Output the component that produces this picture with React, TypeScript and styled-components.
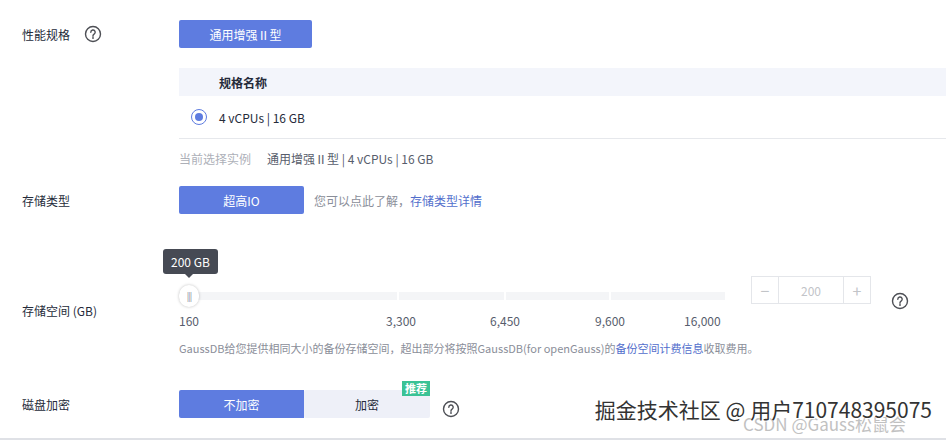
import styled, { createGlobalStyle } from "styled-components";

const Global = createGlobalStyle`
  body { margin: 0; background: #fff; font-family: "Noto Sans CJK SC", "Noto Sans", sans-serif; color: #252b3a; }
`;

const Page = styled.div`
  width: 946px;
  height: 440px;
  position: relative;
  overflow: hidden;
  border-bottom: 2px solid #dfe1e6;
  box-sizing: border-box;
`;

const Row = styled.div<{ $h: number; $align?: string }>`
  display: flex;
  align-items: ${p => p.$align || "center"};
  height: ${p => p.$h}px;
`;

const Label = styled.div`
  width: 179px;
  padding-left: 22px;
  box-sizing: border-box;
  font-size: 12px;
  color: #252b3a;
  display: flex;
  align-items: center;
  gap: 14px;
  flex-shrink: 0;
`;

const Content = styled.div`
  flex: 1;
  display: flex;
  flex-direction: column;
`;

const Btn = styled.div<{ $w: number; $active?: boolean }>`
  width: ${p => p.$w}px;
  height: 28px;
  display: flex;
  align-items: center;
  justify-content: center;
  font-size: 12px;
  background: ${p => (p.$active ? "#5e7ce0" : "#eef0f8")};
  color: ${p => (p.$active ? "#fff" : "#252b3a")};
  border-radius: 2px;
  position: relative;
`;

const Table = styled.div`
  margin-top: 0;
`;
const THead = styled.div`
  height: 28px;
  background: #f3f5fb;
  display: flex;
  align-items: center;
  padding-left: 40px;
  font-size: 12px;
  font-weight: 700;
`;
const TRow = styled.div`
  height: 42px;
  border-bottom: 1px solid #e6e8ec;
  display: flex;
  align-items: center;
  padding-left: 12px;
  gap: 12px;
  font-size: 12px;
`;
const Radio = styled.span`
  width: 14px;
  height: 14px;
  border: 1px solid #5e7ce0;
  border-radius: 50%;
  display: flex;
  align-items: center;
  justify-content: center;
  &::after { content: ""; width: 8px; height: 8px; border-radius: 50%; background: #5e7ce0; }
`;
const Current = styled.div`
  font-size: 12px;
  color: #575d6c;
  display: flex;
  gap: 16px;
  height: 40px;
  align-items: center;
  span:first-child { color: #adb0b8; }
`;
const Hint = styled.span`
  font-size: 12px;
  color: #8a8e99;
  margin-left: 10px;
  a { color: #526ecc; text-decoration: none; }
`;

const SliderWrap = styled.div`
  position: relative;
  width: 548px;
  height: 28px;
  display: flex;
  align-items: center;
`;
const Seg = styled.div<{ $w: number }>`
  width: ${p => p.$w}px;
  height: 8px;
  background: #f4f5f7;
  margin-right: 2px;
`;
const Thumb = styled.div`
  position: absolute;
  left: 0;
  top: 3px;
  width: 20px;
  height: 22px;
  border-radius: 10px;
  background: #fff;
  box-shadow: 0 0 3px rgba(0,0,0,.25);
  display: flex;
  align-items: center;
  justify-content: center;
  font-size: 9px;
  color: #8a8e99;
  letter-spacing: -1px;
`;
const Tip = styled.div`
  position: absolute;
  left: -16px;
  top: -36px;
  background: #464a54;
  color: #fff;
  font-size: 12px;
  padding: 4px 8px;
  border-radius: 3px;
  white-space: nowrap;
  letter-spacing: 0;
  &::after {
    content: ""; position: absolute; left: 22px; bottom: -4px;
    border: 4px solid transparent; border-bottom: 0; border-top-color: #464a54;
  }
`;
const Ticks = styled.div`
  position: relative;
  width: 548px;
  height: 20px;
  font-size: 12px;
  color: #575d6c;
`;
const Tick = styled.span<{ $x: number }>`
  position: absolute;
  left: ${p => p.$x}px;
  top: 2px;
`;
const Stepper = styled.div`
  margin-left: 24px;
  width: 118px;
  height: 26px;
  border: 1px solid #e4e6ea;
  display: flex;
  color: #c2c4c8;
  font-size: 12px;
  span { width: 26px; display: flex; align-items: center; justify-content: center; font-size: 16px; }
  div { flex: 1; border-left: 1px solid #e4e6ea; border-right: 1px solid #e4e6ea; display: flex; align-items: center; justify-content: center; }
`;
const Note = styled.div`
  font-size: 11px;
  color: #8a8e99;
  a { color: #526ecc; text-decoration: none; }
`;
const Badge = styled.span`
  position: absolute;
  right: 0;
  top: -9px;
  background: #3ac295;
  color: #fff;
  font-size: 11px;
  font-weight: 700;
  padding: 0 3px;
  line-height: 15px;
`;
const Watermark = styled.div`
  position: absolute;
  right: 14px;
  bottom: 14px;
  font-size: 21px;
  color: #333;
  text-shadow: 0 0 2px #fff, 1px 1px 0 #fff;
  font-family: "Noto Sans CJK SC", sans-serif;
  z-index: 1;
`;
const Watermark2 = styled.div`
  position: absolute;
  right: 40px;
  bottom: 2px;
  font-size: 17px;
  color: #999;
  opacity: .6;
  font-family: "Noto Sans CJK SC", sans-serif;
`;

const Help = ({ ml = 0 }: { ml?: number }) => (
  <svg width="18" height="18" viewBox="0 0 18 18" style={{ marginLeft: ml }}>
    <circle cx="9" cy="9" r="7.5" fill="none" stroke="#4d4f55" strokeWidth="1.4" />
    <path d="M6.8 7.2a2.2 2.2 0 1 1 3.3 1.9c-.7.4-1.1.8-1.1 1.6v.5" fill="none" stroke="#4d4f55" strokeWidth="1.4" strokeLinecap="round" />
    <circle cx="9" cy="13" r=".9" fill="#4d4f55" />
  </svg>
);

export default function App() {
  return (
    <Page>
      <Global />
      <Row $h={68}>
        <Label>性能规格 <Help /></Label>
        <Content><Btn $w={133} $active>通用增强Ⅱ型</Btn></Content>
      </Row>
      <Row $h={70} $align="flex-start">
        <Label />
        <Content>
          <Table>
            <THead>规格名称</THead>
            <TRow><Radio />4 vCPUs | 16 GB</TRow>
          </Table>
        </Content>
      </Row>
      <Row $h={40}>
        <Label />
        <Current><span>当前选择实例</span><span>通用增强Ⅱ型 | 4 vCPUs | 16 GB</span></Current>
      </Row>
      <Row $h={44}>
        <Label>存储类型</Label>
        <Btn $w={125} $active>超高IO</Btn>
        <Hint>您可以点此了解，<a>存储类型详情</a></Hint>
      </Row>
      <Row $h={88} $align="flex-end">
        <Label style={{ alignSelf: "flex-end", height: 28, marginBottom: -14 }}>存储空间 (GB)</Label>
        <SliderWrap>
          <Seg $w={219} /><Seg $w={105} /><Seg $w={104} /><Seg $w={114} />
          <Thumb>|||<Tip>200 GB</Tip></Thumb>
        </SliderWrap>
        <Stepper style={{ alignSelf: "flex-end", marginBottom: 6 }}><span>−</span><div>200</div><span>+</span></Stepper>
        <Help ml={20} />
      </Row>
      <Row $h={20}>
        <Label />
        <Ticks>
          <Tick $x={0}>160</Tick><Tick $x={207}>3,300</Tick><Tick $x={311}>6,450</Tick>
          <Tick $x={416}>9,600</Tick><Tick $x={505}>16,000</Tick>
        </Ticks>
      </Row>
      <Row $h={36}>
        <Label />
        <Note>GaussDB给您提供相同大小的备份存储空间，超出部分将按照GaussDB(for openGauss)的<a>备份空间计费信息</a>收取费用。</Note>
      </Row>
      <Row $h={52} $align="flex-end">
        <Label style={{ height: 28 }}>磁盘加密</Label>
        <Btn $w={125} $active style={{ borderRadius: "2px 0 0 2px" }}>不加密</Btn>
        <Btn $w={126}>加密<Badge>推荐</Badge></Btn>
        <Help ml={12} />
      </Row>
      <Watermark2>CSDN @Gauss松鼠会</Watermark2>
      <Watermark>掘金技术社区 @ 用户710748395075</Watermark>
    </Page>
  );
}
